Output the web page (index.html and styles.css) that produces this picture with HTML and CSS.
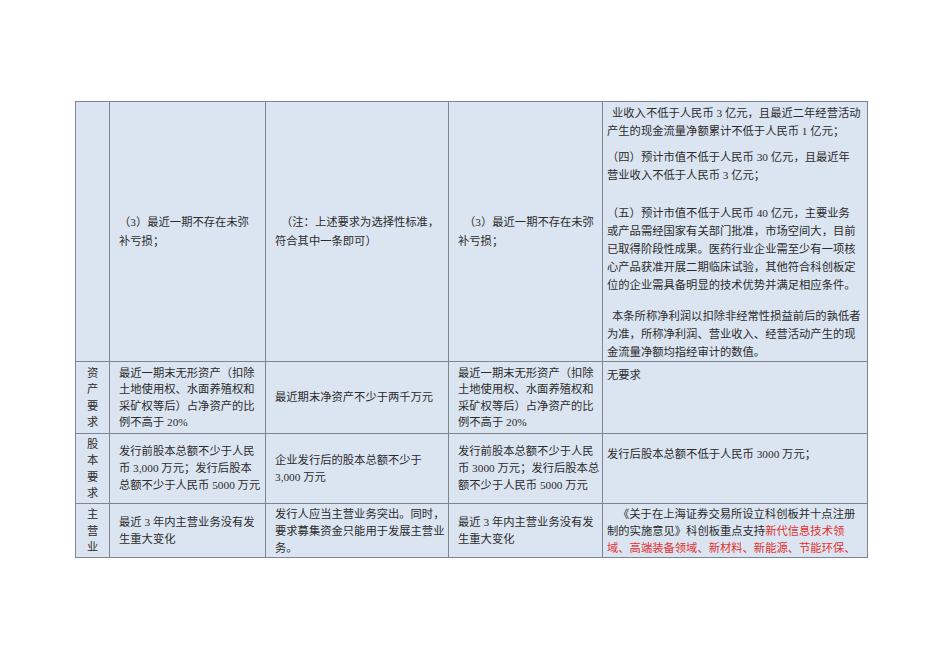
FILE: index.html
```html
<!DOCTYPE html>
<html lang="zh-CN">
<head>
<meta charset="utf-8">
<title>科创板上市条件对比</title>
<link rel="stylesheet" href="styles.css">
</head>
<body>
<table class="cmp">
  <colgroup>
    <col class="c1"><col class="c2"><col class="c3"><col class="c4"><col class="c5">
  </colgroup>
  <tr class="r1">
    <td class="head"></td>
    <td class="mid">（3）最近一期不存在未弥<br>补亏损；</td>
    <td class="mid ind">（注：上述要求为选择性标准，<br>符合其中一条即可）</td>
    <td class="mid ind">（3）最近一期不存在未弥<br>补亏损；</td>
    <td class="wide top first">
      <p class="p1"><span class="sp"></span>业收入不低于人民币 3 亿元，且最近二年经营活动<br>产生的现金流量净额累计不低于人民币 1 亿元；</p>
      <p class="p2">（四）预计市值不低于人民币 30 亿元，且最近年<br>营业收入不低于人民币 3 亿元；</p>
      <p class="p3">（五）预计市值不低于人民币 40 亿元，主要业务<br>或产品需经国家有关部门批准，市场空间大，目前<br>已取得阶段性成果。医药行业企业需至少有一项核<br>心产品获准开展二期临床试验，其他符合科创板定<br>位的企业需具备明显的技术优势并满足相应条件。</p>
      <p class="p4"><span class="sp"></span>本条所称净利润以扣除非经常性损益前后的孰低者<br>为准，所称净利润、营业收入、经营活动产生的现<br>金流量净额均指经审计的数值。</p>
    </td>
  </tr>
  <tr class="r2">
    <td class="head">资产要求</td>
    <td class="mid">最近一期末无形资产（扣除<br>土地使用权、水面养殖权和<br>采矿权等后）占净资产的比<br>例不高于 20%</td>
    <td class="mid">最近期末净资产不少于两千万元</td>
    <td class="mid">最近一期末无形资产（扣除<br>土地使用权、水面养殖权和<br>采矿权等后）占净资产的比<br>例不高于 20%</td>
    <td class="wide top pt-a">无要求</td>
  </tr>
  <tr class="r3">
    <td class="head">股本要求</td>
    <td class="mid">发行前股本总额不少于人民<br>币 3,000 万元；发行后股本<br>总额不少于人民币 5000 万元</td>
    <td class="mid">企业发行后的股本总额不少于<br>3,000 万元</td>
    <td class="mid">发行前股本总额不少于人民<br>币 3000 万元；发行后股本总<br>额不少于人民币 5000 万元</td>
    <td class="wide top pt-b">发行后股本总额不低于人民币 3000 万元；</td>
  </tr>
  <tr class="r4">
    <td class="head top pt-c">主营业</td>
    <td class="mid">最近 3 年内主营业务没有发<br>生重大变化</td>
    <td class="top pt-c">发行人应当主营业务突出。同时，<br>要求募集资金只能用于发展主营业<br>务。</td>
    <td class="mid">最近 3 年内主营业务没有发<br>生重大变化</td>
    <td class="wide top pt-c"><span class="em1"></span>《关于在上海证券交易所设立科创板并十点注册<br>制的实施意见》科创板重点支持<span class="red">新代信息技术领<br>域、高端装备领域、新材料、新能源、节能环保、</span></td>
  </tr>
</table>
</body>
</html>
```
FILE: styles.css
```css
html, body {
  margin: 0;
  padding: 0;
  background: #ffffff;
}

body {
  width: 950px;
  height: 672px;
  overflow: hidden;
  font-family: "Liberation Serif", "Noto Sans CJK SC", serif;
  font-size: 11.3px;
  color: #2b2b2b;
}

.cmp {
  margin: 101px 0 0 75px;
  border-collapse: collapse;
  table-layout: fixed;
  width: 792px;
  background: #dbe5f1;
}

.c1 { width: 34px; }
.c2 { width: 156px; }
.c3 { width: 183px; }
.c4 { width: 154px; }
.c5 { width: 265px; }

.cmp td {
  border: 1px solid #7d8593;
  padding: 0 6px 0 9px;
  line-height: 17px;
  white-space: nowrap;
  vertical-align: middle;
  overflow: visible;
}

.cmp td.head {
  white-space: normal;
  padding: 0 10px 0 11px;
  line-height: 16.5px;
  word-break: break-all;
}

.cmp td.wide {
  padding-left: 4px;
}

.cmp td.mid { vertical-align: middle; }
.cmp td.top { vertical-align: top; }

.cmp td.ind { text-indent: 6px; }

.r1 { height: 257px; }
.r2 { height: 72px; }
.r3 { height: 70px; }
.r4 { height: 52px; }

.r1 td { line-height: 19px; }
.r2 td { line-height: 16.5px; }

.cmp td.first {
  padding-top: 2px;
  line-height: 18px;
}

.first p {
  margin: 0;
}
.first .p2 { margin-top: 8px; }
.first .p3 { margin-top: 20px; }
.first .p4 { margin-top: 13px; }

.sp {
  display: inline-block;
  width: 5px;
}

.em1 {
  display: inline-block;
  width: 11px;
}

.cmp td.pt-a { padding-top: 5px; }
.cmp td.pt-b { padding-top: 12px; }
.cmp td.pt-c { padding-top: 2px; }

.red {
  color: #e3322f;
}
```
